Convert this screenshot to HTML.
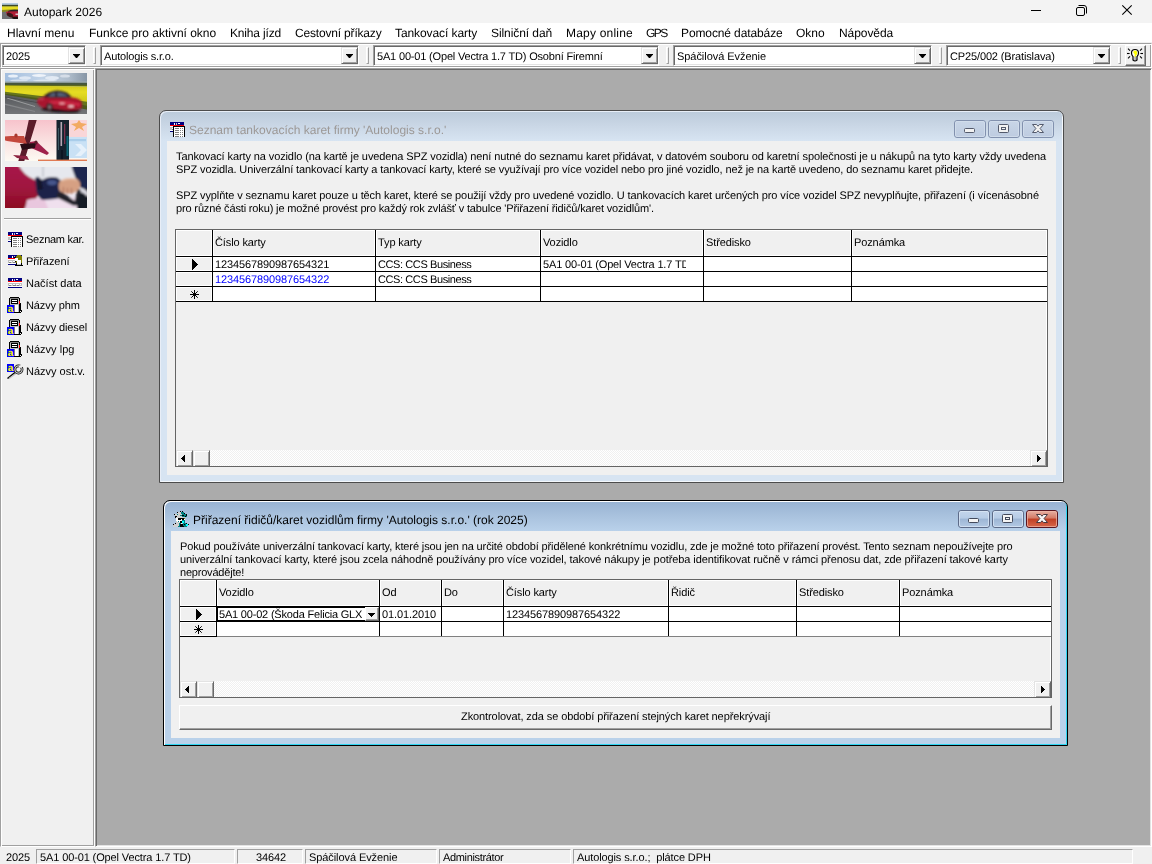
<!DOCTYPE html>
<html lang="cs">
<head>
<meta charset="utf-8">
<title>Autopark 2026</title>
<style>
*{box-sizing:border-box;margin:0;padding:0}
html,body{width:1152px;height:864px;overflow:hidden;background:#f0f0f0}
body{text-rendering:geometricPrecision}
.t,.tx,.sbi,#menubar span,.sp span{will-change:transform}
.t,.tx,.sbi,.sp span{padding-top:1px}
#title,#w1title,#w2title{padding-top:0}
body{position:relative;font-family:"Liberation Sans",sans-serif;font-size:11px;color:#000;line-height:13px;letter-spacing:-0.11px}
.a{position:absolute}
.t{position:absolute;white-space:nowrap}
/* title bar */
#titlebar{left:0;top:0;width:1152px;height:23px;background:#f3f3f3}
#title{left:24px;top:5px;font-size:12px;line-height:15px;letter-spacing:0}
/* menu */
#menubar{left:0;top:23px;width:1152px;height:19px;background:#fff}
#menubar span{position:absolute;top:3px;font-size:12px;line-height:15px;white-space:nowrap;color:#000;letter-spacing:0}
/* toolbar */
#toolbar{left:0;top:43px;width:1152px;height:25px;background:#f0f0f0;border:1px solid;border-color:#a0a0a0 #fff #fff #a0a0a0;box-shadow:inset 1px 1px 0 #fff, inset -1px -1px 0 #a0a0a0}
.combo{position:absolute;top:45px;height:21px;background:#fff;border:1px solid;border-color:#a0a0a0 #fff #fff #a0a0a0;box-shadow:inset 1px 1px 0 #696969, inset -1px -1px 0 #e3e3e3}
.combo .tx{position:absolute;left:3px;top:4px;white-space:nowrap;line-height:13px}
.combo .btn{position:absolute;right:0;top:1px;width:17px;height:17px;background:#f0f0f0;border:1px solid;border-color:#e3e3e3 #696969 #696969 #e3e3e3;box-shadow:inset 1px 1px 0 #fff, inset -1px -1px 0 #a0a0a0}
.combo .btn:after{content:"";position:absolute;left:4px;top:6px;width:7px;height:4px;background:#000;clip-path:polygon(0 0,7px 0,7px .5px,4px 4px,3px 4px,0 .5px)}
.sep{position:absolute;top:47px;width:3px;height:17px;border:1px solid;border-color:#fff #a0a0a0 #a0a0a0 #fff;background:#f0f0f0}
/* sidebar */
#sidebar{left:0;top:68px;width:95px;height:779px;background:#f0f0f0;border:1px solid;border-color:#a0a0a0 #fff #fff #a0a0a0;box-shadow:inset 1px 1px 0 #fff, inset -1px -1px 0 #a0a0a0}
.sbi{position:absolute;left:26px;white-space:nowrap}
/* MDI */
#mdi{left:95px;top:68px;width:1057px;height:779px;background:#ababab;border:1px solid;border-color:#a0a0a0 #fff #fff #a0a0a0;box-shadow:inset 1px 1px 0 #696969, inset -1px -1px 0 #e3e3e3}
/* windows */
.win{position:absolute;border:1px solid #4f4f4f;border-radius:7px 7px 0 0}
.cl{position:absolute;background:#f0f0f0}
.grid{position:absolute;border:1px solid #646464;background:#f0f0f0;overflow:hidden}
.hl{position:absolute;height:1px;background:#000}
.vl{position:absolute;width:1px;background:#000}
.cell{position:absolute;background:#fff}
.hc{position:absolute;background:#f0f0f0;box-shadow:inset 0 0 0 1px #fff}
.wb{position:absolute;height:18px;width:32px;border:1px solid #8a96a8;border-radius:3px}
.sbb{width:16px;height:16px;background:#f0f0f0;border:1px solid;border-color:#e3e3e3 #696969 #696969 #e3e3e3;box-shadow:inset 1px 1px 0 #fff, inset -1px -1px 0 #a0a0a0}
/* status */
#status{left:0;top:847px;width:1152px;height:17px;background:#f0f0f0}
.sp{position:absolute;top:849px;height:15px;border:1px solid;border-color:#a0a0a0 #fff #fff #a0a0a0}
.sp span{position:absolute;top:1px;white-space:nowrap}
</style>
</head>
<body>
<!-- TITLE BAR -->
<div class="a" id="titlebar"></div>
<div class="t" id="title">Autopark 2026</div>
<svg class="a" style="left:2px;top:3px" width="16" height="16" viewBox="0 0 16 16">
<defs><clipPath id="c0"><rect width="16" height="16"/></clipPath><filter id="b0"><feGaussianBlur stdDeviation="0.5"/></filter></defs>
<g clip-path="url(#c0)"><rect width="16" height="16" fill="#7a7c7e"/><g filter="url(#b0)">
<rect x="-1" y="-1" width="18" height="3" fill="#b4cadf"/><rect x="-1" y="1.8" width="18" height="1.8" fill="#3c4a28"/>
<rect x="-1" y="3.4" width="18" height="3.8" fill="#e6dc22"/><polygon points="-1,7 17,6 17,9 -1,9.5" fill="#8c8c1c"/>
<polygon points="-1,9 6,8.5 17,8 17,17 -1,17" fill="#6e7072"/>
<path d="M4 9 Q8 6.5 17 7.5 V15 Q10 15.5 5 12z" fill="#b01c34"/><path d="M6 8 Q10 6 16 7 L16 8.2 Q10 8 6 8.6z" fill="#2a2028"/>
<ellipse cx="8" cy="12" rx="3.4" ry="2" fill="#3a1418" transform="rotate(25 8 12)"/><ellipse cx="14" cy="14.8" rx="4" ry="1.3" fill="#1c0c10"/>
<rect x="13.5" y="10.6" width="3" height="1.2" fill="#e8e8f0"/>
</g></g></svg>
<svg class="a" style="left:1026px;top:0" width="126" height="23" viewBox="0 0 126 23" fill="none" stroke="#000" stroke-width="1">
<path d="M5 10.5 H15"/>
<rect x="50.5" y="7.5" width="8" height="8" rx="1.5"/><path d="M52.5 5.5 H58 Q60.5 5.5 60.5 8 V13.5"/>
<path d="M96.3 5.3 L105.7 14.7 M105.7 5.3 L96.3 14.7" stroke-width="1.1"/>
</svg>
<!-- MENU BAR -->
<div class="a" id="menubar">
<span style="left:7px">Hlavní menu</span>
<span style="letter-spacing:-0.01px;left:89px">Funkce pro aktivní okno</span>
<span style="letter-spacing:-0.168px;left:230px">Kniha jízd</span>
<span style="letter-spacing:-0.179px;left:295px">Cestovní příkazy</span>
<span style="letter-spacing:-0.084px;left:395px">Tankovací karty</span>
<span style="letter-spacing:-0.077px;left:491px">Silniční daň</span>
<span style="letter-spacing:0.198px;left:566px">Mapy online</span>
<span style="letter-spacing:-1.575px;left:646px">GPS</span>
<span style="letter-spacing:-0.114px;left:681px">Pomocné databáze</span>
<span style="left:796px">Okno</span>
<span style="letter-spacing:-0.074px;left:839px">Nápověda</span>
</div>
<!-- TOOLBAR -->
<div class="a" id="toolbar"></div>
<div class="combo" style="left:2px;width:84px"><span class="tx">2025</span><i class="btn"></i></div>
<div class="sep" style="left:93px"></div>
<div class="combo" style="left:100px;width:259px"><span class="tx" style="letter-spacing:-0.164px;">Autologis s.r.o.</span><i class="btn"></i></div>
<div class="sep" style="left:366px"></div>
<div class="combo" style="left:373px;width:286px"><span class="tx" style="letter-spacing:-0.174px;">5A1 00-01 (Opel Vectra 1.7 TD) Osobní Firemní</span><i class="btn"></i></div>
<div class="sep" style="left:666px"></div>
<div class="combo" style="left:673px;width:259px"><span class="tx" style="letter-spacing:-0.05px;">Spáčilová Evženie</span><i class="btn"></i></div>
<div class="sep" style="left:939px"></div>
<div class="combo" style="left:946px;width:165px"><span class="tx" style="letter-spacing:-0.135px;">CP25/002 (Bratislava)</span><i class="btn"></i></div>
<div class="sep" style="left:1118px"></div>
<div class="a" style="left:1125px;top:45px;width:21px;height:21px;background:#f0f0f0;border:1px solid;border-color:#fff #696969 #696969 #fff;box-shadow:inset -1px -1px 0 #a0a0a0"></div>
<svg class="a" style="left:1127px;top:48px" width="16" height="14" viewBox="0 0 16 14">
<path d="M8 1.5 Q11.5 1.5 11.5 5 Q11.5 7 10 8.6 V12 Q8 13.8 6 12 V8.6 Q4.5 7 4.5 5 Q4.5 1.5 8 1.5z" fill="#fff" stroke="#000" stroke-width="1.2"/>
<path d="M8 2.6 Q10.3 2.6 10.3 5 Q10.3 6.6 9 7.8 V9 H7.6 V6 L6.4 5 Q6 2.6 8 2.6z" fill="#ffff00"/>
<rect x="7.4" y="8.6" width="1.4" height="3.8" fill="#a0a0a0"/>
<g stroke="#000" stroke-width="1.1">
<path d="M1 0.6 L3 2.6"/><path d="M15 0.6 L13 2.6"/><path d="M0 5.5 H2.6"/><path d="M13.4 5.5 H16"/><path d="M1 10.4 L3 8.4"/><path d="M15 10.4 L13 8.4"/>
</g></svg>
<!-- SIDEBAR -->
<div class="a" id="sidebar"></div>
<!-- sidebar photos -->
<svg class="a" style="left:5px;top:73px" width="82" height="41" viewBox="0 0 82 41">
<defs>
<filter id="b1" x="-10%" y="-10%" width="120%" height="120%"><feGaussianBlur stdDeviation="0.7"/></filter>
<filter id="b2" x="-20%" y="-20%" width="140%" height="140%"><feGaussianBlur stdDeviation="1.3"/></filter>
<filter id="b3" x="-20%" y="-20%" width="140%" height="140%"><feGaussianBlur stdDeviation="0.9"/></filter>
<linearGradient id="sky" x1="0" y1="0" x2="1" y2="0"><stop offset="0" stop-color="#a3bede"/><stop offset=".45" stop-color="#c3d4e8"/><stop offset=".78" stop-color="#aebccb"/><stop offset="1" stop-color="#8796a6"/></linearGradient>
<linearGradient id="road" x1="0" y1="0" x2="0" y2="1"><stop offset="0" stop-color="#56595c"/><stop offset="1" stop-color="#77787b"/></linearGradient>
<linearGradient id="yel" x1="0" y1="0" x2="0" y2="1"><stop offset="0" stop-color="#cfc81e"/><stop offset=".35" stop-color="#e6dd22"/><stop offset="1" stop-color="#c9c41c"/></linearGradient>
<clipPath id="c1"><rect width="82" height="41"/></clipPath>
</defs>
<g clip-path="url(#c1)">
<rect width="82" height="41" fill="url(#sky)"/>
<g filter="url(#b1)">
<ellipse cx="8" cy="3" rx="5" ry="1.6" fill="#e9f0f9"/><ellipse cx="20" cy="5" rx="6" ry="1.8" fill="#dfe8f4"/><ellipse cx="34" cy="2.5" rx="7" ry="1.5" fill="#eef3fa"/><ellipse cx="47" cy="5" rx="7" ry="2" fill="#e2eaf4"/><ellipse cx="60" cy="3" rx="5" ry="1.6" fill="#d5dde8"/><ellipse cx="14" cy="7.6" rx="9" ry="1.2" fill="#d4e0ee"/><ellipse cx="40" cy="7.8" rx="12" ry="1.2" fill="#dbe5f0"/>
<rect x="-2" y="8.4" width="86" height="1.8" fill="#9aa9ae"/>
<rect x="-2" y="9.8" width="86" height="3" fill="#45563e"/>
<rect x="-2" y="11.8" width="86" height="1.4" fill="#5d6a1e"/>
<polygon points="-2,12.6 84,13.4 84,31 40,25 -2,20.5" fill="url(#yel)"/>
<polygon points="-2,18.6 36,23 84,29 84,38 36,28.5 -2,22" fill="#66751e"/>
<polygon points="-2,20.5 36,25.5 84,33 84,38 36,28.5 -2,22" fill="#4d5a1c"/>
<polygon points="-2,21.6 36,27.5 84,37 84,43 -2,43" fill="url(#road)"/>
<polygon points="2,24.6 30,33 30,33.9 2,25.5" fill="#9a9c9e"/>
<polygon points="-2,23.2 40,30.6 40,31.2 -2,23.9" fill="#45484a"/>
<polygon points="-2,30 30,38 30,39 -2,31.4" fill="#85878a"/>
</g>
<g filter="url(#b3)">
<path d="M36 36.4 Q50 40.5 72 39.4 L76 37 L40 33z" fill="#1d1014"/>
<path d="M32 27.5 Q32.5 24.6 38 24 L68 24.6 Q76 26 77 30 L77 34.6 Q74 37.6 62 37.2 L38 34.4 Q31.6 32.4 32 27.5z" fill="#a8182e"/>
<path d="M38 24 Q43 18 52 17.4 Q62 17.4 67 24.4 Q52 25.6 38 24z" fill="#2a1e2c"/>
<path d="M43 23.4 Q47 19.6 52 19.6 Q59 19.6 63 23.6z" fill="#56627a"/>
<path d="M50 19.6 L52.4 19.6 L52.4 23.5 L50 23.5z" fill="#2a1e2c"/>
<path d="M44 28.6 Q60 26.8 75 30.6 L75 33 Q60 30 44 31z" fill="#d02646"/>
<ellipse cx="44.5" cy="34" rx="3.4" ry="4" fill="#3a2428"/><ellipse cx="44.5" cy="34" rx="1.5" ry="2" fill="#8a7478"/>
<ellipse cx="57" cy="30.6" rx="3" ry="1" fill="#f2a6b0"/><ellipse cx="66" cy="33.4" rx="3" ry="1.1" fill="#f6d4d8"/>
<rect x="33" y="25.4" width="6" height="1.4" fill="#c8405a"/>
</g></g>
</svg>
<svg class="a" style="left:5px;top:120px" width="82" height="41" viewBox="0 0 82 41">
<defs><linearGradient id="pk" x1="0" y1="0" x2="0" y2="1"><stop offset="0" stop-color="#f7c3cc"/><stop offset=".5" stop-color="#fae0e0"/><stop offset="1" stop-color="#fdfaf2"/></linearGradient>
<clipPath id="c2"><rect width="82" height="41"/></clipPath></defs>
<g clip-path="url(#c2)">
<rect width="82" height="41" fill="url(#pk)"/>
<g filter="url(#b1)">
<rect x="64" y="0" width="18" height="17" fill="#f9d6d8"/>
<polygon points="66,4 72,3 74,0 76,3 82,4 77,7 79,11 74,8 69,11 71,7" fill="#f2ab62"/>
<rect x="63" y="17" width="19" height="21" fill="#c9e1f5"/>
<polygon points="70,24 76,24 82,30 76,36 70,36 76,30" fill="#e6f1fb"/>
<rect x="64" y="19" width="17" height="2.2" fill="#a9cdea"/>
<polygon points="24,-1 32,-1 25,22 19,42 13,42 19,22" fill="#5b1a2a"/>
<polygon points="19,16 22,24 2,21 -1,20 -1,16.5 6,16" fill="#c4483e"/>
<polygon points="25,22 31,21 44,33 42,35 24,27" fill="#a0224c"/>
<polygon points="15,24 31,23 30,28 17,30" fill="#2c1018"/>
<polygon points="8,35 22,36 24,40 12,38" fill="#8e2440"/>
<ellipse cx="11" cy="15.5" rx="1.6" ry="2" fill="#a8382e"/><ellipse cx="31" cy="22.5" rx="1.6" ry="2" fill="#5b1a2a"/>
<rect x="51.5" y="-1" width="12.5" height="43" fill="#14242e"/>
<rect x="55.5" y="2" width="1.6" height="24" fill="#b7a8b6"/><rect x="59" y="4" width="1.3" height="20" fill="#7c3050"/><rect x="53" y="8" width="1" height="22" fill="#3a5660"/>
<rect x="61.5" y="16" width="2" height="20" fill="#0e6878"/>
<rect x="56" y="30" width="2" height="10" fill="#0c1820"/>
<rect x="33" y="39.6" width="50" height="1.6" fill="#e07a52"/>
</g></g>
</svg>
<svg class="a" style="left:5px;top:167px" width="82" height="41" viewBox="0 0 82 41">
<defs><linearGradient id="cr" x1="0" y1="0" x2="0" y2="1"><stop offset="0" stop-color="#a8144a"/><stop offset=".5" stop-color="#a01640"/><stop offset="1" stop-color="#8a0a1c"/></linearGradient>
<filter id="b4" x="-20%" y="-20%" width="140%" height="140%"><feGaussianBlur stdDeviation="1.05"/></filter>
<clipPath id="c3"><rect width="82" height="41"/></clipPath></defs>
<g clip-path="url(#c3)">
<rect width="82" height="41" fill="#ece8f0"/>
<g filter="url(#b4)">
<rect x="14" y="-2" width="60" height="16" fill="#e6e8ee"/>
<rect x="37" y="-2" width="2" height="12" fill="#c8ccd4"/>
<rect x="20" y="30" width="54" height="14" fill="#f0e0ee"/>
<path d="M-3 -3 L13 -3 Q18 8 30 13 Q35 22 32 31 Q22 33 19 44 L-3 44z" fill="url(#cr)"/>
<path d="M22 33 Q30 30 40 33 L44 44 L20 44z" fill="#e9c7de"/>
<path d="M66 -3 L86 -3 L86 24 L76 21 Q69 10 66 -3z" fill="#1c2850"/>
<path d="M72 23 L86 21 L86 44 L72 44z" fill="#181c28"/>
<path d="M74 21.5 Q80 20.4 84 27 L82 29.4 Q78 24.6 74 25.4z" fill="#dcdce4"/>
<path d="M30 11 L33 9.6 L37 13 Q44 8.6 52 10.6 Q58.6 14 57 24 Q57 31 50 32 L38 33 Q32 31 31 22z" fill="#1b2248"/>
<ellipse cx="47" cy="15.6" rx="5" ry="2.6" fill="#46568c"/>
<path d="M32 13 L36 12 L38 22 L33 23z" fill="#14162c"/>
<path d="M52 26 L57 25 L69.6 34 L72.6 22 L76 23 L72 38.4 L68 38.4 L52 30.4z" fill="#20242c"/>
<path d="M55 14 Q62 9 72 12 Q76.6 15 74.6 21 Q70 27.4 62 26.4 L55 24.4 Q52 19 55 14z" fill="#d6a083"/>
<path d="M58.4 20 L58.4 26 M62.4 21 L62.4 27 M66.4 21 L66.4 27" stroke="#a86858" stroke-width="1"/>
<path d="M57 13.4 Q64 10.4 72 13" stroke="#e8c0a6" stroke-width="1.6" fill="none"/>
</g></g>
</svg>
<div class="a" style="left:4px;top:218px;width:87px;height:2px;border-top:1px solid #a0a0a0;border-bottom:1px solid #fff"></div>
<svg class="a" style="left:8px;top:232px" width="16" height="16" viewBox="0 0 16 16" shape-rendering="crispEdges">
<rect x="0" y="0" width="14" height="3" fill="#000080"/>
<rect x="4" y="1" width="1" height="2" fill="#fff"/><rect x="6" y="1" width="1" height="2" fill="#c0c0c0"/><rect x="8" y="1" width="2" height="1" fill="#fff"/>
<rect x="0" y="3" width="14" height="1" fill="#ff0000"/>
<rect x="0" y="4" width="14" height="5" fill="#c0c0c0"/>
<rect x="0" y="4" width="14" height="1" fill="#fff"/>
<rect x="1" y="6" width="3" height="1" fill="#fff"/><rect x="5" y="6" width="2" height="1" fill="#fff"/><rect x="8" y="6" width="3" height="1" fill="#fff"/><rect x="12" y="6" width="1" height="1" fill="#fff"/>
<rect x="1" y="7" width="2" height="1" fill="#808080"/><rect x="5" y="7" width="3" height="1" fill="#808080"/><rect x="9" y="7" width="2" height="1" fill="#808080"/>
<rect x="0" y="8" width="14" height="1" fill="#fff"/>
<rect x="0" y="9" width="14" height="1" fill="#000080"/>
<rect x="3" y="4" width="12" height="11" fill="#fff"/>
<rect x="3" y="4" width="12" height="1" fill="#000"/><rect x="3" y="4" width="1" height="11" fill="#000"/><rect x="14" y="4" width="1" height="11" fill="#000"/>
<rect x="5" y="6" width="4" height="1" fill="#808080"/><rect x="10" y="6" width="1" height="1" fill="#808080"/><rect x="12" y="6" width="1" height="1" fill="#808080"/>
<rect x="5" y="8" width="4" height="1" fill="#808080"/><rect x="10" y="8" width="1" height="1" fill="#808080"/><rect x="12" y="8" width="1" height="1" fill="#808080"/>
<rect x="5" y="10" width="4" height="1" fill="#808080"/><rect x="10" y="10" width="1" height="1" fill="#808080"/><rect x="12" y="10" width="1" height="1" fill="#808080"/>
<rect x="5" y="12" width="4" height="1" fill="#808080"/><rect x="10" y="12" width="1" height="1" fill="#808080"/><rect x="12" y="12" width="1" height="1" fill="#808080"/>
<rect x="5" y="14" width="4" height="1" fill="#808080"/><rect x="10" y="14" width="1" height="1" fill="#808080"/><rect x="12" y="14" width="1" height="1" fill="#808080"/>
<rect x="0" y="5" width="2" height="3" fill="#c0c0c0"/></svg>
<svg class="a" style="left:8px;top:255px" width="16" height="16" viewBox="0 0 16 16" shape-rendering="crispEdges">
<rect x="0" y="0" width="14" height="3" fill="#000080"/>
<rect x="4" y="1" width="1" height="2" fill="#fff"/><rect x="6" y="1" width="1" height="2" fill="#c0c0c0"/><rect x="8" y="1" width="2" height="1" fill="#fff"/>
<rect x="0" y="3" width="14" height="1" fill="#ff0000"/>
<rect x="0" y="4" width="14" height="5" fill="#c0c0c0"/>
<rect x="0" y="4" width="14" height="1" fill="#fff"/>
<rect x="1" y="6" width="3" height="1" fill="#fff"/><rect x="5" y="6" width="2" height="1" fill="#fff"/><rect x="8" y="6" width="3" height="1" fill="#fff"/><rect x="12" y="6" width="1" height="1" fill="#fff"/>
<rect x="1" y="7" width="2" height="1" fill="#808080"/><rect x="5" y="7" width="3" height="1" fill="#808080"/><rect x="9" y="7" width="2" height="1" fill="#808080"/>
<rect x="0" y="8" width="14" height="1" fill="#fff"/>
<rect x="0" y="9" width="14" height="1" fill="#000080"/>
<rect x="8" y="1" width="6" height="7" fill="#808000"/><rect x="9" y="0" width="4" height="1" fill="#808000"/>
<rect x="7" y="3" width="3" height="3" fill="#fff"/><rect x="6" y="2" width="2" height="1" fill="#000"/><rect x="7" y="6" width="1" height="1" fill="#000"/>
<rect x="9" y="5" width="4" height="5" fill="#fff"/><rect x="8" y="8" width="1" height="2" fill="#000"/><rect x="13" y="8" width="1" height="2" fill="#000"/>
<rect x="7" y="10" width="8" height="1" fill="#000"/><rect x="9" y="9" width="4" height="1" fill="#c0c0c0"/></svg>
<svg class="a" style="left:8px;top:278px" width="16" height="16" viewBox="0 0 16 16" shape-rendering="crispEdges">
<rect x="0" y="0" width="14" height="3" fill="#000080"/>
<rect x="4" y="1" width="1" height="2" fill="#fff"/><rect x="6" y="1" width="1" height="2" fill="#c0c0c0"/><rect x="8" y="1" width="2" height="1" fill="#fff"/>
<rect x="0" y="3" width="14" height="1" fill="#ff0000"/>
<rect x="0" y="4" width="14" height="5" fill="#c0c0c0"/>
<rect x="0" y="4" width="14" height="1" fill="#fff"/>
<rect x="1" y="6" width="3" height="1" fill="#fff"/><rect x="5" y="6" width="2" height="1" fill="#fff"/><rect x="8" y="6" width="3" height="1" fill="#fff"/><rect x="12" y="6" width="1" height="1" fill="#fff"/>
<rect x="1" y="7" width="2" height="1" fill="#808080"/><rect x="5" y="7" width="3" height="1" fill="#808080"/><rect x="9" y="7" width="2" height="1" fill="#808080"/>
<rect x="0" y="8" width="14" height="1" fill="#fff"/>
<rect x="0" y="9" width="14" height="1" fill="#000080"/>
</svg>
<svg class="a" style="left:7px;top:297px" width="16" height="16" viewBox="0 0 16 16" shape-rendering="crispEdges">
<rect x="2" y="1" width="11" height="15" fill="#000"/>
<rect x="3" y="0" width="9" height="1" fill="#000"/>
<rect x="3" y="1" width="9" height="14" fill="#c0c0c0"/>
<rect x="3" y="1" width="9" height="1" fill="#808080"/>
<rect x="4" y="2" width="7" height="5" fill="#000"/><rect x="5" y="3" width="5" height="1" fill="#fff"/><rect x="5" y="5" width="5" height="1" fill="#fff"/>
<rect x="8" y="8" width="3" height="7" fill="#fff"/><rect x="7" y="8" width="1" height="7" fill="#808080"/>
<rect x="12" y="4" width="1" height="3" fill="#ff0000"/>
<rect x="13" y="6" width="1" height="8" fill="#000"/><rect x="14" y="13" width="1" height="2" fill="#000"/><rect x="13" y="15" width="1" height="1" fill="#000"/>
<rect x="0" y="8" width="7" height="8" fill="#0000ff"/>
<text x="3.5" y="15" font-family="Liberation Sans, sans-serif" font-size="10" font-weight="bold" fill="#ffff00" text-anchor="middle" shape-rendering="auto">a</text>
</svg>
<svg class="a" style="left:7px;top:319px" width="16" height="16" viewBox="0 0 16 16" shape-rendering="crispEdges">
<rect x="2" y="1" width="11" height="15" fill="#000"/>
<rect x="3" y="0" width="9" height="1" fill="#000"/>
<rect x="3" y="1" width="9" height="14" fill="#c0c0c0"/>
<rect x="3" y="1" width="9" height="1" fill="#808080"/>
<rect x="4" y="2" width="7" height="5" fill="#000"/><rect x="5" y="3" width="5" height="1" fill="#fff"/><rect x="5" y="5" width="5" height="1" fill="#fff"/>
<rect x="8" y="8" width="3" height="7" fill="#fff"/><rect x="7" y="8" width="1" height="7" fill="#808080"/>
<rect x="12" y="4" width="1" height="3" fill="#ff0000"/>
<rect x="13" y="6" width="1" height="8" fill="#000"/><rect x="14" y="13" width="1" height="2" fill="#000"/><rect x="13" y="15" width="1" height="1" fill="#000"/>
<rect x="0" y="8" width="7" height="8" fill="#0000ff"/>
<text x="3.5" y="15" font-family="Liberation Sans, sans-serif" font-size="10" font-weight="bold" fill="#ffff00" text-anchor="middle" shape-rendering="auto">a</text>
</svg>
<svg class="a" style="left:7px;top:341px" width="16" height="16" viewBox="0 0 16 16" shape-rendering="crispEdges">
<rect x="2" y="1" width="11" height="15" fill="#000"/>
<rect x="3" y="0" width="9" height="1" fill="#000"/>
<rect x="3" y="1" width="9" height="14" fill="#c0c0c0"/>
<rect x="3" y="1" width="9" height="1" fill="#808080"/>
<rect x="4" y="2" width="7" height="5" fill="#000"/><rect x="5" y="3" width="5" height="1" fill="#fff"/><rect x="5" y="5" width="5" height="1" fill="#fff"/>
<rect x="8" y="8" width="3" height="7" fill="#fff"/><rect x="7" y="8" width="1" height="7" fill="#808080"/>
<rect x="12" y="4" width="1" height="3" fill="#ff0000"/>
<rect x="13" y="6" width="1" height="8" fill="#000"/><rect x="14" y="13" width="1" height="2" fill="#000"/><rect x="13" y="15" width="1" height="1" fill="#000"/>
<rect x="0" y="8" width="7" height="8" fill="#0000ff"/>
<text x="3.5" y="15" font-family="Liberation Sans, sans-serif" font-size="10" font-weight="bold" fill="#ffff00" text-anchor="middle" shape-rendering="auto">a</text>
</svg>
<svg class="a" style="left:7px;top:364px" width="17" height="16" viewBox="0 0 17 16">
<path d="M0.5 14.5 L8 8.5" stroke="#000" stroke-width="1.6" fill="none"/>
<path d="M2 14.6 L9 9.4" stroke="#c0c0c0" stroke-width="1.2" fill="none"/>
<circle cx="11.5" cy="5.5" r="3.6" fill="none" stroke="#000" stroke-width="2.6"/>
<circle cx="11.5" cy="5.5" r="3.6" fill="none" stroke="#c8c8c8" stroke-width="1.3"/>
<rect x="12" y="2" width="5" height="2.4" fill="#f0f0f0" transform="rotate(-25 12 3)"/>
<rect x="0" y="0" width="7" height="8" fill="#0000ff" shape-rendering="crispEdges"/>
<text x="3.5" y="7" font-family="Liberation Sans, sans-serif" font-size="10" font-weight="bold" fill="#ffff00" text-anchor="middle">a</text>
</svg>
<div class="sbi" style="letter-spacing:-0.275px;top:233px">Seznam kar.</div>
<div class="sbi" style="letter-spacing:-0.066px;top:255px">Přiřazení</div>
<div class="sbi" style="letter-spacing:0.005px;top:277px">Načíst data</div>
<div class="sbi" style="letter-spacing:-0.128px;top:299px">Názvy phm</div>
<div class="sbi" style="letter-spacing:-0.106px;top:321px">Názvy diesel</div>
<div class="sbi" style="letter-spacing:0.013px;top:343px">Názvy lpg</div>
<div class="sbi" style="letter-spacing:-0.009px;top:365px">Názvy ost.v.</div>
<!-- MDI -->
<div class="a" id="mdi"></div>
<!-- WINDOW 1 (inactive) -->
<div class="win" id="w1" style="left:159px;top:110px;width:905px;height:373px;border-color:#4c4c4c;box-shadow:inset 1px 1px 0 #e8eef7, inset -1px -1px 0 #f4f8fc;background:linear-gradient(#bbcada 0,#c9d6e5 14px,#d7e4f2 30px,#d7e4f2 100%)"></div>
<div class="cl" style="left:167px;top:141px;width:889px;height:334px"></div>
<svg class="a" style="left:170px;top:122px" width="16" height="16" viewBox="0 0 16 16" shape-rendering="crispEdges">
<rect x="0" y="0" width="14" height="3" fill="#000080"/>
<rect x="4" y="1" width="1" height="2" fill="#fff"/><rect x="6" y="1" width="1" height="2" fill="#c0c0c0"/><rect x="8" y="1" width="2" height="1" fill="#fff"/>
<rect x="0" y="3" width="14" height="1" fill="#ff0000"/>
<rect x="0" y="4" width="14" height="5" fill="#c0c0c0"/>
<rect x="0" y="4" width="14" height="1" fill="#fff"/>
<rect x="1" y="6" width="3" height="1" fill="#fff"/><rect x="5" y="6" width="2" height="1" fill="#fff"/><rect x="8" y="6" width="3" height="1" fill="#fff"/><rect x="12" y="6" width="1" height="1" fill="#fff"/>
<rect x="1" y="7" width="2" height="1" fill="#808080"/><rect x="5" y="7" width="3" height="1" fill="#808080"/><rect x="9" y="7" width="2" height="1" fill="#808080"/>
<rect x="0" y="8" width="14" height="1" fill="#fff"/>
<rect x="0" y="9" width="14" height="1" fill="#000080"/>
<rect x="3" y="4" width="12" height="11" fill="#fff"/>
<rect x="3" y="4" width="12" height="1" fill="#000"/><rect x="3" y="4" width="1" height="11" fill="#000"/><rect x="14" y="4" width="1" height="11" fill="#000"/>
<rect x="5" y="6" width="4" height="1" fill="#808080"/><rect x="10" y="6" width="1" height="1" fill="#808080"/><rect x="12" y="6" width="1" height="1" fill="#808080"/>
<rect x="5" y="8" width="4" height="1" fill="#808080"/><rect x="10" y="8" width="1" height="1" fill="#808080"/><rect x="12" y="8" width="1" height="1" fill="#808080"/>
<rect x="5" y="10" width="4" height="1" fill="#808080"/><rect x="10" y="10" width="1" height="1" fill="#808080"/><rect x="12" y="10" width="1" height="1" fill="#808080"/>
<rect x="5" y="12" width="4" height="1" fill="#808080"/><rect x="10" y="12" width="1" height="1" fill="#808080"/><rect x="12" y="12" width="1" height="1" fill="#808080"/>
<rect x="5" y="14" width="4" height="1" fill="#808080"/><rect x="10" y="14" width="1" height="1" fill="#808080"/><rect x="12" y="14" width="1" height="1" fill="#808080"/>
<rect x="0" y="5" width="2" height="3" fill="#c0c0c0"/></svg>
<div class="t" id="w1title" style="letter-spacing:-0.039px;letter-spacing:0;left:189px;top:123px;font-size:12px;line-height:15px;color:#9c9896">Seznam tankovacích karet firmy 'Autologis s.r.o.'</div>
<svg class="a" width="0" height="0" style="left:0;top:0"><defs>
<linearGradient id="bi" x1="0" y1="0" x2="0" y2="1"><stop offset="0" stop-color="#c9d6e7"/><stop offset="1" stop-color="#bdcbe0"/></linearGradient>
<linearGradient id="ba" x1="0" y1="0" x2="0" y2="1"><stop offset="0" stop-color="#c4d6ec"/><stop offset=".45" stop-color="#b7cce6"/><stop offset=".5" stop-color="#9db6d5"/><stop offset="1" stop-color="#b4cae4"/></linearGradient>
<linearGradient id="bc" x1="0" y1="0" x2="0" y2="1"><stop offset="0" stop-color="#e8b3a6"/><stop offset=".45" stop-color="#d47a66"/><stop offset=".5" stop-color="#c03f24"/><stop offset="1" stop-color="#d9694c"/></linearGradient>
</defs></svg>
<svg class="a" style="left:954px;top:120px" width="32" height="18" viewBox="0 0 32 18"><rect x="0.5" y="0.5" width="31" height="17" rx="2.5" fill="url(#bi)" stroke="#8291ae"/><rect x="1.5" y="1.5" width="29" height="15" rx="1.5" fill="none" stroke="#d3deec" stroke-opacity=".8"/><rect x="10.5" y="8.5" width="10" height="4" rx="1" fill="#f2f2f2" stroke="#535a6c"/></svg>
<svg class="a" style="left:988px;top:120px" width="32" height="18" viewBox="0 0 32 18"><rect x="0.5" y="0.5" width="31" height="17" rx="2.5" fill="url(#bi)" stroke="#8291ae"/><rect x="1.5" y="1.5" width="29" height="15" rx="1.5" fill="none" stroke="#d3deec" stroke-opacity=".8"/><rect x="10.5" y="4.5" width="10" height="8" rx="1" fill="#f2f2f2" stroke="#535a6c"/><rect x="13.5" y="7.5" width="4" height="2" fill="none" stroke="#535a6c"/></svg>
<svg class="a" style="left:1022px;top:120px" width="32" height="18" viewBox="0 0 32 18"><rect x="0.5" y="0.5" width="31" height="17" rx="2.5" fill="url(#bi)" stroke="#8291ae"/><rect x="1.5" y="1.5" width="29" height="15" rx="1.5" fill="none" stroke="#d3deec" stroke-opacity=".8"/><path d="M10.5 4.5h4l1.5 1.7 1.5-1.7h4l-3.4 4 3.4 4h-4l-1.5-1.7-1.5 1.7h-4l3.4-4z" fill="#f2f2f2" stroke="#535a6c" stroke-linejoin="round"/></svg>
<div class="t" style="letter-spacing:-0.107px;left:176px;top:150px">Tankovací karty na vozidlo (na kartě je uvedena SPZ vozidla) není nutné do seznamu karet přidávat, v datovém souboru od karetní společnosti je u nákupů na tyto karty vždy uvedena</div>
<div class="t" style="letter-spacing:-0.113px;left:176px;top:163px">SPZ vozidla. Univerzální tankovací karty a tankovací karty, které se využívají pro více vozidel nebo pro jiné vozidlo, než je na kartě uvedeno, do seznamu karet přidejte.</div>
<div class="t" style="letter-spacing:-0.102px;left:176px;top:189px">SPZ vyplňte v seznamu karet pouze u těch karet, které se použijí vždy pro uvedené vozidlo. U tankovacích karet určených pro více vozidel SPZ nevyplňujte, přiřazení (i vícenásobné</div>
<div class="t" style="letter-spacing:-0.147px;left:176px;top:202px">pro různé části roku) je možné provést pro každý rok zvlášť v tabulce 'Přiřazení řidičů/karet vozidlům'.</div>
<div class="grid" id="g1" style="left:175px;top:229px;width:873px;height:238px">
 <div class="cell" style="left:37px;top:27px;width:834px;height:45px"></div>
 <div class="hc" style="left:0px;top:0;width:36px;height:26px"></div>
 <div class="hc" style="left:37px;top:0;width:162px;height:26px"></div>
 <div class="hc" style="left:200px;top:0;width:164px;height:26px"></div>
 <div class="hc" style="left:365px;top:0;width:162px;height:26px"></div>
 <div class="hc" style="left:528px;top:0;width:147px;height:26px"></div>
 <div class="hc" style="left:676px;top:0;width:195px;height:26px"></div>
 <div class="hc" style="left:0;top:27px;width:36px;height:14px"></div>
 <div class="hc" style="left:0;top:42px;width:36px;height:14px"></div>
 <div class="hc" style="left:0;top:57px;width:36px;height:14px"></div>
 <div class="hl" style="left:0;top:26px;width:871px"></div>
 <div class="hl" style="left:0;top:41px;width:871px"></div>
 <div class="hl" style="left:0;top:56px;width:871px"></div>
 <div class="hl" style="left:0;top:71px;width:871px"></div>
 <div class="vl" style="left:36px;top:0;height:72px"></div>
 <div class="vl" style="left:199px;top:0;height:72px"></div>
 <div class="vl" style="left:364px;top:0;height:72px"></div>
 <div class="vl" style="left:527px;top:0;height:72px"></div>
 <div class="vl" style="left:675px;top:0;height:72px"></div>
 <div class="vl" style="left:871px;top:0;height:72px"></div>
 <div class="t" style="left:39px;top:6px">Číslo karty</div>
 <div class="t" style="left:202px;top:6px">Typ karty</div>
 <div class="t" style="left:367px;top:6px">Vozidlo</div>
 <div class="t" style="left:530px;top:6px">Středisko</div>
 <div class="t" style="left:678px;top:6px">Poznámka</div>
 <div class="t" style="left:39px;top:28px;">1234567890987654321</div>
 <div class="t" style="letter-spacing:-0.404px;left:202px;top:28px;">CCS: CCS Business</div>
 <div class="t" style="letter-spacing:-0.157px;left:367px;top:28px;width:143px;overflow:hidden">5A1 00-01 (Opel Vectra 1.7 TD) Osobní</div>
 <div class="t" style="left:39px;top:43px;color:#0000ff">1234567890987654322</div>
 <div class="t" style="letter-spacing:-0.404px;left:202px;top:43px;">CCS: CCS Business</div>

 <svg class="a" style="left:16px;top:29px" width="6" height="11" viewBox="0 0 6 11" shape-rendering="crispEdges"><polygon points="0,0 6,5.5 0,11" fill="#000"/></svg>
 <svg class="a" style="left:14px;top:60px" width="9" height="9" viewBox="0 0 9 9" stroke="#000" stroke-width="1" fill="none"><path d="M4.5 0V9M0 4.5H9M1.3 1.3L7.7 7.7M7.7 1.3L1.3 7.7"/></svg>
 <div class="a" style="left:0;top:220px;width:871px;height:16px;background:#f8f8f8 conic-gradient(#fff 25%,#f0f0f0 0 50%,#fff 0 75%,#f0f0f0 0) 0 0/2px 2px"></div>
 <div class="a sbb" style="border-bottom-width:0;left:0;top:220px;width:17px"></div>
 <div class="a sbb" style="border-bottom-width:0;left:17px;top:220px;width:17px"></div>
 <div class="a sbb" style="border-bottom-width:0;left:854px;top:220px;width:17px"></div>
 <div class="a" style="left:870px;top:72px;width:1px;height:148px;background:#fff"></div>
 <svg class="a" style="left:5px;top:225px" width="4" height="7" viewBox="0 0 4 7" shape-rendering="crispEdges"><polygon points="4,0 0,3.5 4,7" fill="#000"/></svg>
 <svg class="a" style="left:861px;top:225px" width="4" height="7" viewBox="0 0 4 7" shape-rendering="crispEdges"><polygon points="0,0 4,3.5 0,7" fill="#000"/></svg>
</div>
<!-- WINDOW 2 (active) -->
<div class="win" id="w2" style="left:163px;top:500px;width:905px;height:246px;border-color:#000;box-shadow:inset 1px 1px 0 #fff, inset -1px -1px 0 #2fd6f2;background:linear-gradient(#97b2d2 0,#a8c1dd 14px,#b9d1ea 30px,#b9d1ea 100%)"></div>
<div class="cl" style="left:171px;top:531px;width:889px;height:207px"></div>
<svg class="a" style="left:173px;top:511px" width="17" height="17" viewBox="0 0 17 17" shape-rendering="crispEdges">
<rect x="4" y="1" width="4" height="2" fill="#d0d0d0"/><rect x="8" y="1" width="3" height="2" fill="#008080"/>
<rect x="2" y="3" width="7" height="3" fill="#d0d0d0"/><rect x="9" y="3" width="5" height="3" fill="#008080"/>
<rect x="3" y="6" width="8" height="1" fill="#d0d0d0"/>
<rect x="7" y="0" width="1" height="1" fill="#000"/><rect x="9" y="0" width="1" height="1" fill="#000"/><rect x="4" y="1" width="1" height="1" fill="#000"/>
<rect x="1" y="3" width="1" height="1" fill="#000"/><rect x="11" y="2" width="1" height="1" fill="#000"/><rect x="13" y="3" width="1" height="2" fill="#000"/>
<rect x="4" y="3" width="1" height="1" fill="#008080"/><rect x="7" y="4" width="2" height="1" fill="#008080"/><rect x="9" y="4" width="2" height="1" fill="#000"/><rect x="12" y="5" width="1" height="1" fill="#000"/>
<rect x="2" y="5" width="2" height="1" fill="#000"/><rect x="2" y="6" width="1" height="1" fill="#000"/>
<rect x="3" y="7" width="9" height="3" fill="#fff"/>
<rect x="5" y="7" width="7" height="1" fill="#000"/><rect x="5" y="8" width="3" height="1" fill="#000"/><rect x="9" y="8" width="2" height="1" fill="#000"/><rect x="11" y="7" width="1" height="1" fill="#808000"/>
<rect x="3" y="10" width="5" height="6" fill="#d0d0d0"/><rect x="4" y="9" width="4" height="2" fill="#fff"/>
<rect x="9" y="9" width="3" height="3" fill="#008080"/><rect x="9" y="10" width="2" height="2" fill="#00ffff"/>
<rect x="1" y="13" width="3" height="3" fill="#d0d0d0"/><rect x="0" y="14" width="2" height="2" fill="#d0d0d0"/>
<rect x="7" y="10" width="2" height="2" fill="#000"/><rect x="8" y="12" width="1" height="1" fill="#fff"/>
<rect x="6" y="12" width="2" height="4" fill="#008080"/><rect x="7" y="13" width="3" height="3" fill="#000"/>
<rect x="10" y="12" width="4" height="4" fill="#008080"/><rect x="13" y="13" width="2" height="2" fill="#00ffff"/>
<rect x="0" y="13" width="1" height="1" fill="#000"/><rect x="2" y="12" width="1" height="1" fill="#000"/><rect x="13" y="12" width="1" height="1" fill="#000"/><rect x="15" y="13" width="1" height="1" fill="#000"/>
<rect x="11" y="13" width="1" height="1" fill="#000"/><rect x="10" y="15" width="1" height="1" fill="#000"/><rect x="5" y="15" width="1" height="1" fill="#008080"/><rect x="5" y="10" width="1" height="1" fill="#008080"/>
</svg>
<div class="t" id="w2title" style="letter-spacing:0;left:193px;top:513px;font-size:12px;line-height:15px;color:#000">Přiřazení řidičů/karet vozidlům firmy 'Autologis s.r.o.' (rok 2025)</div>
<svg class="a" style="left:958px;top:510px" width="32" height="18" viewBox="0 0 32 18"><rect x="0.5" y="0.5" width="31" height="17" rx="2.5" fill="url(#ba)" stroke="#5d6b88"/><rect x="1.5" y="1.5" width="29" height="15" rx="1.5" fill="none" stroke="#dbe7f5" stroke-opacity=".75"/><rect x="10.5" y="8.5" width="10" height="4" rx="1" fill="#f4f4f4" stroke="#434a5c"/></svg>
<svg class="a" style="left:992px;top:510px" width="32" height="18" viewBox="0 0 32 18"><rect x="0.5" y="0.5" width="31" height="17" rx="2.5" fill="url(#ba)" stroke="#5d6b88"/><rect x="1.5" y="1.5" width="29" height="15" rx="1.5" fill="none" stroke="#dbe7f5" stroke-opacity=".75"/><rect x="10.5" y="4.5" width="10" height="8" rx="1" fill="#f4f4f4" stroke="#434a5c"/><rect x="13.5" y="7.5" width="4" height="2" fill="none" stroke="#434a5c"/></svg>
<svg class="a" style="left:1026px;top:510px" width="32" height="18" viewBox="0 0 32 18"><rect x="0.5" y="0.5" width="31" height="17" rx="2.5" fill="url(#bc)" stroke="#5a1620"/><rect x="1.5" y="1.5" width="29" height="15" rx="1.5" fill="none" stroke="#f0b8a8" stroke-opacity=".7"/><path d="M10.5 4.5h4l1.5 1.7 1.5-1.7h4l-3.4 4 3.4 4h-4l-1.5-1.7-1.5 1.7h-4l3.4-4z" fill="#f6f6f6" stroke="#4a3a40" stroke-linejoin="round"/></svg>
<div class="t" style="letter-spacing:-0.122px;left:180px;top:540px">Pokud používáte univerzální tankovací karty, které jsou jen na určité období přidělené konkrétnímu vozidlu, zde je možné toto přiřazení provést. Tento seznam nepoužívejte pro</div>
<div class="t" style="letter-spacing:-0.087px;left:180px;top:553px">univerzální tankovací karty, které jsou zcela náhodně používány pro více vozidel, takové nákupy je potřeba identifikovat ručně v rámci přenosu dat, zde přiřazení takové karty</div>
<div class="t" style="letter-spacing:-0.205px;left:180px;top:566px">neprovádějte!</div>
<div class="grid" id="g2" style="left:179px;top:579px;width:873px;height:119px">
 <div class="cell" style="left:37px;top:27px;width:834px;height:30px"></div>
 <div class="hc" style="left:0px;top:0;width:36px;height:26px"></div>
 <div class="hc" style="left:37px;top:0;width:162px;height:26px"></div>
 <div class="hc" style="left:200px;top:0;width:61px;height:26px"></div>
 <div class="hc" style="left:262px;top:0;width:61px;height:26px"></div>
 <div class="hc" style="left:324px;top:0;width:164px;height:26px"></div>
 <div class="hc" style="left:489px;top:0;width:127px;height:26px"></div>
 <div class="hc" style="left:617px;top:0;width:102px;height:26px"></div>
 <div class="hc" style="left:720px;top:0;width:151px;height:26px"></div>
 <div class="hc" style="left:0;top:27px;width:36px;height:14px"></div>
 <div class="hc" style="left:0;top:42px;width:36px;height:14px"></div>
 <div class="hl" style="left:0;top:26px;width:871px"></div>
 <div class="hl" style="left:0;top:41px;width:871px"></div>
 <div class="hl" style="left:0;top:56px;width:871px"></div>
 <div class="hl" style="left:37px;top:56px;width:834px;background:#808080"></div>
 <div class="vl" style="left:36px;top:0;height:57px"></div>
 <div class="vl" style="left:199px;top:0;height:56px"></div>
 <div class="vl" style="left:261px;top:0;height:56px"></div>
 <div class="vl" style="left:323px;top:0;height:56px"></div>
 <div class="vl" style="left:488px;top:0;height:56px"></div>
 <div class="vl" style="left:616px;top:0;height:56px"></div>
 <div class="vl" style="left:719px;top:0;height:56px"></div>
 <div class="vl" style="left:871px;top:0;height:56px"></div>
 <div class="t" style="left:39px;top:6px">Vozidlo</div>
 <div class="t" style="left:202px;top:6px">Od</div>
 <div class="t" style="left:264px;top:6px">Do</div>
 <div class="t" style="left:326px;top:6px">Číslo karty</div>
 <div class="t" style="left:491px;top:6px">Řidič</div>
 <div class="t" style="left:619px;top:6px">Středisko</div>
 <div class="t" style="left:722px;top:6px">Poznámka</div>
 <div class="t" style="letter-spacing:-0.193px;left:39px;top:28px;width:143px;overflow:hidden">5A1 00-02 (Škoda Felicia GLX) Osobní</div>
 <div class="t" style="left:202px;top:28px;">01.01.2010</div>
 <div class="t" style="left:326px;top:28px;">1234567890987654322</div>
 <div class="a" style="left:37px;top:27px;width:162px;height:14px;border:1px solid #000"></div>
 <div class="a" style="left:185px;top:27px;width:14px;height:14px;background:#f0f0f0;border:1px solid;border-color:#fff #696969 #696969 #fff;box-shadow:inset -1px -1px 0 #a0a0a0"></div>
 <svg class="a" style="left:188px;top:33px" width="7" height="4" viewBox="0 0 7 4" shape-rendering="crispEdges"><polygon points="0,0 7,0 3.5,4" fill="#000"/></svg>
 <svg class="a" style="left:16px;top:29px" width="6" height="11" viewBox="0 0 6 11" shape-rendering="crispEdges"><polygon points="0,0 6,5.5 0,11" fill="#000"/></svg>
 <svg class="a" style="left:14px;top:45px" width="9" height="9" viewBox="0 0 9 9" stroke="#000" stroke-width="1" fill="none"><path d="M4.5 0V9M0 4.5H9M1.3 1.3L7.7 7.7M7.7 1.3L1.3 7.7"/></svg>
 <div class="a" style="left:0;top:101px;width:871px;height:16px;background:#f8f8f8 conic-gradient(#fff 25%,#f0f0f0 0 50%,#fff 0 75%,#f0f0f0 0) 0 0/2px 2px"></div>
 <div class="a sbb" style="border-bottom-width:0;left:0;top:101px;width:17px"></div>
 <div class="a sbb" style="border-bottom-width:0;left:17px;top:101px;width:17px"></div>
 <div class="a sbb" style="border-bottom-width:0;left:854px;top:101px;width:17px"></div>
 <div class="a" style="left:870px;top:57px;width:1px;height:44px;background:#fff"></div>
 <svg class="a" style="left:5px;top:106px" width="4" height="7" viewBox="0 0 4 7" shape-rendering="crispEdges"><polygon points="4,0 0,3.5 4,7" fill="#000"/></svg>
 <svg class="a" style="left:861px;top:106px" width="4" height="7" viewBox="0 0 4 7" shape-rendering="crispEdges"><polygon points="0,0 4,3.5 0,7" fill="#000"/></svg>
</div>
<div class="a" id="chkbtn" style="left:179px;top:705px;width:873px;height:25px;background:#f0f0f0;border:1px solid;border-color:#fff #696969 #696969 #fff;box-shadow:inset -1px -1px 0 #a0a0a0"></div>
<div class="t" style="letter-spacing:-0.094px;left:461px;top:710px">Zkontrolovat, zda se období přiřazení stejných karet nepřekrývají</div>
<!-- STATUS -->
<div class="a" id="status"></div>
<div class="t" style="left:6px;top:851px">2025</div>
<div class="sp" style="left:36px;width:199px"><span style="letter-spacing:-0.12px;left:3px">5A1 00-01 (Opel Vectra 1.7 TD)</span></div>
<div class="sp" style="left:237px;width:66px"><span style="left:18px">34642</span></div>
<div class="sp" style="left:305px;width:132px"><span style="letter-spacing:-0.081px;left:3px">Spáčilová Evženie</span></div>
<div class="sp" style="left:439px;width:132px"><span style="letter-spacing:-0.35px;left:3px">Administrátor</span></div>
<div class="sp" style="left:573px;width:560px"><span style="left:3px">Autologis s.r.o.;&nbsp; plátce DPH</span></div>
</body>
</html>
